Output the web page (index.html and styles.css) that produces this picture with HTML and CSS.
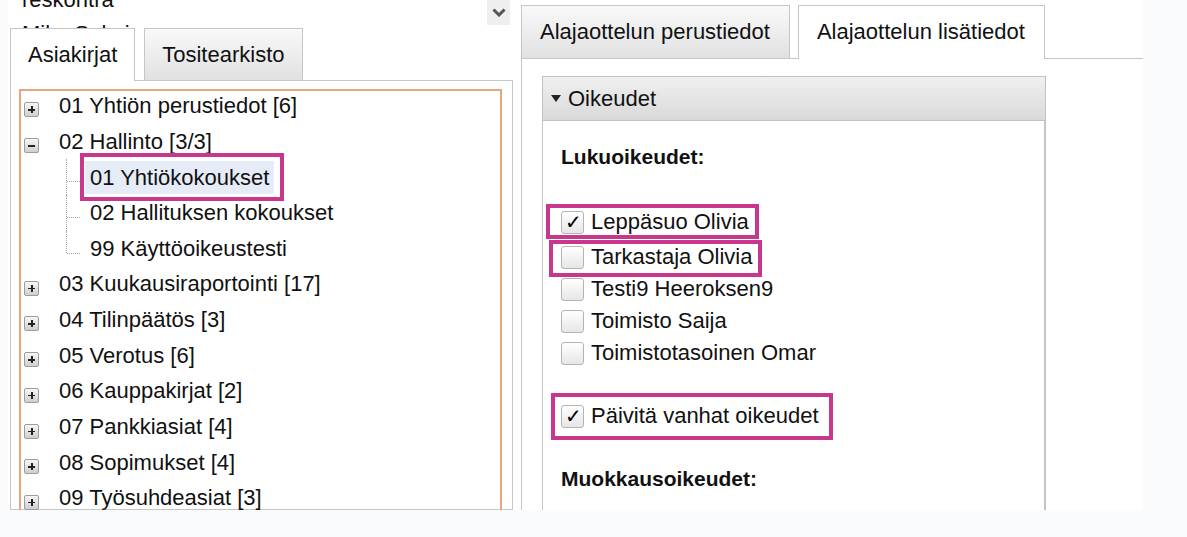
FILE: index.html
```html
<!DOCTYPE html>
<html lang="fi">
<head>
    <meta charset="UTF-8">
    <meta name="viewport" content="width=device-width, initial-scale=1.0">
    <title>Alajaottelun lisätiedot</title>
    <link rel="stylesheet" href="styles.css">
</head>
<body>
    <div class="screen">
        <!-- vasen puoli: asiakirjapuu -->
        <div class="left">
            <div class="listbox">
                <div class="listbox-items">
                    <div>reskontra</div>
                    <div>Mika Salmi</div>
                </div>
                <div class="scroll-down">
                    <svg width="14" height="9" viewBox="0 0 14 9"><path d="M1.5 1.5 L7 7 L12.5 1.5" fill="none" stroke="#555" stroke-width="3"/></svg>
                </div>
            </div>
            <div class="tabs">
                <div class="tab active">Asiakirjat</div>
                <div class="tab">Tositearkisto</div>
            </div>
            <div class="tab-panel">
                <div class="tree">
                    <ul class="nodes">
                        <li><div class="row"><span class="exp plus"></span><span class="label">01 Yhtiön perustiedot [6]</span></div></li>
                        <li>
                            <div class="row"><span class="exp minus"></span><span class="label">02 Hallinto [3/3]</span></div>
                            <ul class="children">
                                <li><div class="row"><span class="label selected">01 Yhtiökokoukset</span></div></li>
                                <li><div class="row"><span class="label">02 Hallituksen kokoukset</span></div></li>
                                <li><div class="row"><span class="label">99 Käyttöoikeustesti</span></div></li>
                            </ul>
                        </li>
                        <li><div class="row"><span class="exp plus"></span><span class="label">03 Kuukausiraportointi [17]</span></div></li>
                        <li><div class="row"><span class="exp plus"></span><span class="label">04 Tilinpäätös [3]</span></div></li>
                        <li><div class="row"><span class="exp plus"></span><span class="label">05 Verotus [6]</span></div></li>
                        <li><div class="row"><span class="exp plus"></span><span class="label">06 Kauppakirjat [2]</span></div></li>
                        <li><div class="row"><span class="exp plus"></span><span class="label">07 Pankkiasiat [4]</span></div></li>
                        <li><div class="row"><span class="exp plus"></span><span class="label">08 Sopimukset [4]</span></div></li>
                        <li><div class="row"><span class="exp plus"></span><span class="label">09 Työsuhdeasiat [3]</span></div></li>
                    </ul>
                </div>
            </div>
        </div>

        <!-- oikea puoli: alajaottelun tiedot -->
        <div class="right">
            <div class="tabs right-tabs">
                <div class="tab">Alajaottelun perustiedot</div>
                <div class="tab active">Alajaottelun lisätiedot</div>
            </div>
            <div class="tab-panel right-panel">
                <div class="section">
                    <div class="section-head">
                        <svg width="10" height="7" viewBox="0 0 10 7"><path d="M0 0 H10 L5 7 Z" fill="#222"/></svg>
                        <span>Oikeudet</span>
                    </div>
                    <div class="section-body">
                        <div class="heading">Lukuoikeudet:</div>
                        <div class="checks">
                            <label class="check-row mark mark-a"><span class="box checked"></span>Leppäsuo Olivia</label>
                            <label class="check-row mark mark-b"><span class="box"></span>Tarkastaja Olivia</label>
                            <label class="check-row"><span class="box"></span>Testi9 Heeroksen9</label>
                            <label class="check-row"><span class="box"></span>Toimisto Saija</label>
                            <label class="check-row"><span class="box"></span>Toimistotasoinen Omar</label>
                        </div>
                        <label class="check-row update mark mark-c"><span class="box checked"></span>Päivitä vanhat oikeudet</label>
                        <div class="heading edit">Muokkausoikeudet:</div>
                    </div>
                </div>
            </div>
        </div>
    </div>
</body>
</html>
```

FILE: styles.css
```css
body { margin: 0; background: #fafbfd; font-family: "Liberation Sans", Arial, sans-serif; font-size: 22px; color: #111; }
.screen { display: flex; gap: 8px; width: 1135px; height: 510px; margin-left: 8px; background: #fff; overflow: hidden; }

/* left column */
.left { width: 503px; margin-left: 2px; display: flex; flex-direction: column; flex-shrink: 0; }
.listbox { height: 28px; overflow: hidden; display: flex; justify-content: space-between; }
.listbox-items { margin-top: -17px; padding-left: 12px; line-height: 34px; }
.scroll-down { width: 23px; height: 25px; margin-right: 3px; background: #efefef; display: flex; align-items: center; justify-content: center; }

.tabs { display: flex; align-items: flex-end; gap: 9px; border-bottom: 1px solid #c6c6c6; }
.tab { height: 51px; line-height: 51px; padding: 0 17px; border: 1px solid #c6c6c6; border-bottom: none; background: linear-gradient(#f9f9f9, #e1e1e1); white-space: nowrap; }
.tab.active { height: 52px; margin-bottom: -1px; background: #fff; }

.tab-panel { flex: 1; min-height: 0; border: 1px solid #c6c6c6; border-top: none; padding: 8px 10px 0 8px; }
.tree { height: 440px; border: 2px solid #e9a67c; }
.nodes, .children { list-style: none; margin: 0; padding: 0; }
.nodes { margin-top: -3px; }
.row { display: flex; align-items: center; height: 35.7px; white-space: nowrap; }
.exp { width: 13px; height: 13px; margin: 0 20px 0 3px; position: relative; top: 4px; border: 1px solid #9d9d9d; border-radius: 2px; background: linear-gradient(#f7f7f7, #cfcfcf); }
.exp::before { content: ''; position: absolute; left: 3px; top: 6px; width: 7px; height: 1.5px; background: #222; }
.plus::after { content: ''; position: absolute; left: 6px; top: 3px; width: 1.5px; height: 7px; background: #222; }

.children { margin-left: 45px; }
.children li { position: relative; padding-left: 19px; }
.children li::before { content: ''; position: absolute; left: 0; top: 0; height: 100%; border-left: 1px dotted #a8a8a8; }
.children li:last-child::before { height: calc(50% + 4px); }
.children li::after { content: ''; position: absolute; left: 1px; top: calc(50% + 4px); width: 13px; border-top: 1px dotted #a8a8a8; }
.children .label { padding: 0 5px; line-height: 33px; }
.label.selected { position: relative; background: #e6ecf7; }
.label.selected::after { content: ''; position: absolute; top: -8px; bottom: -7px; left: -5px; right: -10px; border: 4px solid #c8378e; }

/* right column */
.right { flex: 1; display: flex; flex-direction: column; }
.right-tabs { margin-top: 5px; gap: 8px; }
.right-tabs .tab { height: 52px; line-height: 52px; padding: 0 19px 0 18px; }
.right-tabs .tab.active { height: 53px; padding: 0 19px 0 18px; }
.right-panel { border-right: none; border-bottom: none; padding: 17px 0 0 20px; }

.section { width: 504px; }
.section-head { height: 43px; display: flex; align-items: center; gap: 7px; padding-left: 8px; border: 1px solid #c2c2c2; background: linear-gradient(#f0f0f0, #d9d9d9); }
.section-body { height: 420px; border-left: 1px solid #c4c4c4; border-right: 2px solid #c4c4c4; padding: 20px 0 0 18px; }
.heading { font-weight: bold; font-size: 21px; line-height: 32px; }
.checks { margin-top: 33px; }
.check-row { display: flex; align-items: center; gap: 7px; width: fit-content; height: 32px; white-space: nowrap; }
.box { width: 21px; height: 21px; border: 1px solid #b4b4b4; border-radius: 3px; background: linear-gradient(#ffffff, #e6e6e6); position: relative; }
.box.checked::after { content: '✓'; position: absolute; left: 3px; top: -2px; font-size: 20px; font-weight: bold; font-family: "DejaVu Sans", sans-serif; color: #000; }
.mark { position: relative; }
.mark::after { content: ''; position: absolute; border: 4px solid #c8378e; }
.mark-a { margin-bottom: 3px; }
.mark-a::after { top: -2px; bottom: -1px; left: -15px; right: -10px; }
.mark-b::after { top: -1px; bottom: -4px; left: -12px; right: -10px; }
.mark-c::after { top: -7px; bottom: -8px; left: -10px; right: -14px; }
.update { margin-top: 31px; }
.heading.edit { margin-top: 31px; }
```
